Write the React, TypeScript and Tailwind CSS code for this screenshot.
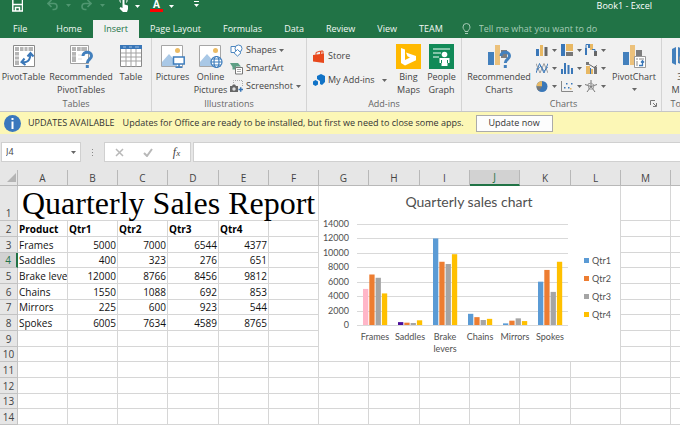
import type { ReactNode } from 'react'

const tabs = ['File', 'Home', 'Insert', 'Page Layout', 'Formulas', 'Data', 'Review', 'View', 'TEAM']
const columns = ['A', 'B', 'C', 'D', 'E', 'F', 'G', 'H', 'I', 'J', 'K', 'L', 'M', 'N']
const quarters = ['Qtr1', 'Qtr2', 'Qtr3', 'Qtr4']
const sales = [
	{ name: 'Frames', values: [5000, 7000, 6544, 4377] },
	{ name: 'Saddles', values: [400, 323, 276, 651] },
	{ name: 'Brake levers', values: [12000, 8766, 8456, 9812] },
	{ name: 'Chains', values: [1550, 1088, 692, 853] },
	{ name: 'Mirrors', values: [225, 600, 923, 544] },
	{ name: 'Spokes', values: [6005, 7634, 4589, 8765] },
]
const seriesColors = ['#5b9bd5', '#ed7d31', '#a5a5a5', '#ffc000']
const pointColors: Record<string, string> = { 'Frames-0': '#ffb6c8', 'Saddles-0': '#4b0f9b' }

function Caret({ className = 'text-[#666]' }: { className?: string }) {
	return (
		<svg viewBox="0 0 5 3" className={`h-[3px] w-[5px] shrink-0 ${className}`} fill="currentColor">
			<path d="M0 0h5L2.500 3z" />
		</svg>
	)
}

function Group({ label, className = '', children }: { label: string; className?: string; children: ReactNode }) {
	return (
		<section className={`relative flex shrink-0 flex-col border-r border-[#d4d4d4] ${className}`}>
			<div className="flex h-[60px] items-start">{children}</div>
			<h2 className="text-center leading-3 text-[#666]">{label}</h2>
		</section>
	)
}

function BigButton({ icon, lines, className, caret }: { icon: ReactNode; lines: string[]; className: string; caret?: boolean }) {
	return (
		<button className={`flex shrink-0 flex-col items-center whitespace-nowrap ${className}`}>
			<span className="flex h-8 items-center pt-1">{icon}</span>
			{lines.map((line) => (
				<span key={line} className="leading-[13px]">{line}</span>
			))}
			{caret && <span className="flex h-3 items-center"><Caret /></span>}
		</button>
	)
}

function SmallButton({ icon, label, caret }: { icon: ReactNode; label: string; caret?: boolean }) {
	return (
		<button className="flex h-[18px] items-center gap-[3px] whitespace-nowrap">
			{icon}
			{label}
			{caret && <Caret />}
		</button>
	)
}

function PivotTableIcon() {
	return (
		<svg viewBox="0 0 24 24" className="size-6" fill="none">
			<path d="M1.500 1.500h21v21h-21z" fill="#fff" stroke="#8a8a8a" />
			<path d="M3 3h4v4H3zM8 3h13v4H8zM3 8h4v13H3z" fill="#b5b5b5" />
			<path d="M12 3v4M16 3v4M3 12h4M3 16h4" stroke="#fff" />
			<path d="M10 18c5 1 8-1 8.500-8M12.500 14.500L9.500 18l4 3M15.500 12.500l3-3.500 3 3.500" stroke="#3a77b8" strokeWidth="2" />
		</svg>
	)
}

function QuestionMark() {
	return (
		<g fill="none" stroke="#4380bd" strokeWidth="3">
			<path d="M14 12c0-5 8.500-5 8.500 0 0 3.500-4.200 3-4.200 7" />
			<path d="M18.300 21v3" />
		</g>
	)
}

function RecommendedTableIcon() {
	return (
		<svg viewBox="0 0 25 25" className="size-[25px]" fill="none">
			<path d="M1.500 1.500h18v18h-18z" fill="#fff" stroke="#a0a0a0" />
			<path d="M3 3h4v4H3zM8 3h10v4H8zM3 8h4v10H3z" fill="#b5b5b5" />
			<path d="M12 3v4M3 12h4M9 11h4M9 15h4" stroke="#ddd" />
			<QuestionMark />
		</svg>
	)
}

function TableIcon() {
	return (
		<svg viewBox="0 0 24 24" className="size-6" fill="none">
			<path d="M1.500 1.500h21v21h-21z" fill="#fff" stroke="#8a8a8a" />
			<path d="M1 1h22v4H1z" fill="#3a77b8" />
			<path d="M4 3h3M10 3h3M16 3h4" stroke="#9dc0e4" />
			<path d="M2 9h20M2 13h20M2 17h20M7 5v18M12 5v18M17 5v18" stroke="#a3a3a3" />
		</svg>
	)
}

function PictureIcon({ online }: { online?: boolean }) {
	return (
		<svg viewBox="0 0 25 25" className="size-[25px]" fill="none">
			<path d="M1.500 1.500h21v21h-21z" fill="#fff" stroke="#a6a6a6" />
			<path d="M2 18l7-8 8 9v3H2z" fill="#a9c8e6" />
			<circle cx="17.500" cy="6.500" r="2.500" fill="#ecbc65" />
			{online ? (
				<g stroke="#3f7ebd" strokeWidth="1.200">
					<circle cx="18.500" cy="18" r="5.500" fill="#fff" />
					<ellipse cx="18.500" cy="18" rx="2.500" ry="5.500" />
					<path d="M13 18h11M14 15h9M14 21h9" />
				</g>
			) : (
				<g stroke="#3f7ebd" strokeWidth="1.500">
					<path d="M13.500 13h10.700v7H13.500z" fill="#fff" />
					<path d="M19 20v3M15.500 23.200h7" />
				</g>
			)}
		</svg>
	)
}

function ShapesIcon() {
	return (
		<svg viewBox="0 0 13 13" className="size-[13px]" fill="#fff" stroke="#4c86c0">
			<path d="M1 2.500h7v6H1z" />
			<circle cx="8.500" cy="4.500" r="3.500" />
			<path d="M7.500 5.500l3.500 3.300-3.500 3.300L4 8.800z" />
		</svg>
	)
}

function SmartArtIcon() {
	return (
		<svg viewBox="0 0 13 13" className="size-[13px]" fill="none">
			<path d="M0 1h8l3 3.500H6v3H2.500V5z" fill="#5e9f85" />
			<path d="M5.500 5.500h7v6.500h-7z" fill="#fff" stroke="#777" />
			<path d="M7 7.500h4M7 9.500h4" stroke="#aaa" />
		</svg>
	)
}

function ScreenshotIcon() {
	return (
		<svg viewBox="0 0 13 13" className="size-[13px]" fill="none">
			<path d="M3.500 3V.5h9V7" stroke="#aaa" strokeDasharray="1 1" />
			<path d="M0 6h2l1-1.500h2L6 6h2v6H0z" fill="#666" />
			<circle cx="4" cy="9" r="1.700" fill="#ddd" />
			<path d="M8.500 9.500h4.500M10.700 7.300v4.500" stroke="#3a77b8" strokeWidth="1.500" />
		</svg>
	)
}

function StoreIcon() {
	return (
		<svg viewBox="0 0 12 13" className="h-[13px] w-3" fill="none">
			<path d="M0 5l11-1.500V13L0 11.500z" fill="#e8481c" />
			<path d="M3 5V2.500l4.500-1.500V4M8 3.500V1h2v3" stroke="#e8481c" />
		</svg>
	)
}

function AddInsIcon() {
	return (
		<svg viewBox="0 0 12 12" className="size-3" fill="#1173c7">
			<path d="M4 2l4-2 4 2v6l-3 3-2-1V7L4 5z" />
			<path d="M0 7.500L2.500 6 5 7.500v3L2.500 12 0 10.500z" />
		</svg>
	)
}

function BingIcon() {
	return (
		<svg viewBox="0 0 25 25" className="size-[25px]">
			<path d="M0 0h25v25H0z" fill="#ffb900" />
			<path d="M5 4l4 1.500v10.500l5-2.600-2.500-1.200-1.500-3.700L20 12v4.200L9 21.500l-4-2.500z" fill="#fff" />
		</svg>
	)
}

function PeopleGraphIcon() {
	return (
		<svg viewBox="0 0 25 25" className="size-[25px]" fill="none">
			<path d="M0 0h25v25H0z" fill="#118a58" />
			<path d="M4 5h17M4 9h8M4 13h6" stroke="#a8d8c2" strokeWidth="1.500" />
			<circle cx="15.500" cy="10.500" r="2.800" fill="#fff" />
			<path d="M10.500 14h10v5h-2v3h-6v-3h-2z" fill="#fff" />
			<path d="M12.500 16v3M18.500 16v3" stroke="#118a58" />
		</svg>
	)
}

function BarsIcon({ pivot }: { pivot?: boolean }) {
	return (
		<svg viewBox="0 0 25 25" className="size-[25px]" fill="none">
			<path d="M1 8h6v13H1z" fill="#4380bd" />
			<path d="M8 1h5v20H8z" fill="#ecc17b" />
			<path d="M14 6h6v8h-6z" fill="#7d7d7d" />
			{pivot ? (
				<g>
					<path d="M12.500 12.500h11v11h-11z" fill="#fff" stroke="#999" />
					<path d="M14 14h2v2h-2zM17 14h5v2h-5zM14 17h2v5h-2z" fill="#c4c4c4" />
					<path d="M17 21.500h3.500V17M19 18.500l1.500-1.700 1.500 1.700" stroke="#3a77b8" strokeWidth="1.300" />
				</g>
			) : (
				<QuestionMark />
			)}
		</svg>
	)
}

const chartIcons: { name: string; art: ReactNode }[] = [
	{
		name: 'Column chart',
		art: <><path d="M0 5h3v7H0z" fill="#3a77b8" /><path d="M4 1h3v11H4z" fill="#e8b863" /><path d="M8.500 3h3v9h-3z" fill="#666" /></>,
	},
	{
		name: 'Hierarchy chart',
		art: <><path d="M0 0h4v12H0z" fill="#3a77b8" /><path d="M5 0h7v7H5z" fill="#e8b863" /><path d="M5 8h7v4H5z" fill="#777" /></>,
	},
	{
		name: 'Waterfall chart',
		art: <><path d="M0 4h2v7H0zM3 0h2v4H3z" fill="#3a77b8" /><path d="M5 0h3v6H5z" fill="#e8b863" /><path d="M9 7h3v5H9z" fill="#666" /><path d="M1 5V.5h3M7 5.500h3v2" stroke="#3a77b8" /></>,
	},
	{
		name: 'Line chart',
		art: <><path d="M0 11L3.500 1.500 8 11l4-9.500" stroke="#3a77b8" /><path d="M0 1.500L4 11l4-9.500L12 11" stroke="#888" strokeWidth=".8" /><path d="M0 7h2l3-3 3 5 4-4" stroke="#3a77b8" strokeWidth=".7" /></>,
	},
	{
		name: 'Statistic chart',
		art: <path d="M0 7h2v5H0zM3 1h2v11H3zM6.500 3h2v9h-2zM10 6h2v6h-2z" fill="#3a77b8" />,
	},
	{
		name: 'Combo chart',
		art: <><path d="M1 4h4v8H1zM6 7h2v5H6z" fill="#e8b863" /><path d="M9 5h3v7H9z" fill="#777" /><path d="M5 6h1v6H5z" fill="#3a77b8" /><path d="M2 1.500l4 2 3 2 3-2" stroke="#666" /><path d="M1 0h3v3H1z" fill="#777" /></>,
	},
	{
		name: 'Pie chart',
		art: <><circle cx="6" cy="6.500" r="5.500" fill="#3a77b8" /><path d="M6 6.500V1a5.500 5.500 0 00-5.500 5.500z" fill="#e8b863" /><path d="M6 6.500H.5A5.500 5.500 0 003 11z" fill="#777" /></>,
	},
	{
		name: 'Scatter chart',
		art: <><path d="M.5 1v10.500H12" stroke="#888" /><path d="M3 7h1.500v1.500H3zM5 3h1.500v1.500H5zM7 7h1.500v1.500H7zM10 3h1.500v1.500H10z" fill="#3a77b8" /><path d="M9 8h1.500v1.500H9z" fill="#e8b863" /></>,
	},
	{
		name: 'Radar chart',
		art: <><path d="M6 0v6.500M0 4.500l6 2 6-2M2 12l4-5.500L10 12" stroke="#777" /><path d="M3 4l3-1 3 2-1 4H4z" stroke="#999" /></>,
	},
]

function QuickAccess() {
	return (
		<div className="flex h-5 items-start text-white">
			<button aria-label="Save" className="ml-3">
				<svg viewBox="0 0 11 12" className="h-3 w-[11px]" fill="none" stroke="currentColor" strokeWidth="1.500">
					<path d="M.8-2v13h9.700V-2M1 4.500h9M3.500 11V7.500h4V11" />
				</svg>
			</button>
			<button aria-label="Undo" className="ml-6 flex items-center gap-2 text-[#4f9670]">
				<svg viewBox="0 0 11 11" className="size-[11px]" fill="none" stroke="currentColor" strokeWidth="1.600">
					<path d="M4.500 0L1 3.500 4.500 7M1.500 3.500H7c4 0 4 6 0 6H5.500" />
				</svg>
				<Caret className="text-[#4f9670]" />
			</button>
			<button aria-label="Redo" className="ml-[10px] flex items-center gap-2 text-[#4f9670]">
				<svg viewBox="0 0 11 11" className="size-[11px]" fill="none" stroke="currentColor" strokeWidth="1.600">
					<path d="M6.500 0L10 3.500 6.500 7M9.500 3.500H4c-4 0-4 6 0 6h1.500" />
				</svg>
				<Caret className="text-[#4f9670]" />
			</button>
			<button aria-label="Touch mode" className="ml-[14px] flex items-center gap-[6px]">
				<svg viewBox="0 0 10 12" className="h-3 w-[10px]" fill="currentColor">
					<path d="M3.500 0h2v4.500l3.500 1v3.500l-1 3H4L.5 8.500 1.500 7l2 1z" />
					<path d="M1.500 2.500C.5.500 1-1 1.500-1M7.500 2.500C8.500.500 8-1 7.500-1" fill="none" stroke="currentColor" />
				</svg>
				<Caret className="text-white" />
			</button>
			<button aria-label="Font color" className="ml-[10px] flex items-center gap-[6px]">
				<span className="w-[13px] border-b-[3px] border-[#f00] text-center text-[10px] leading-[9px] font-bold">A</span>
				<Caret className="text-white" />
			</button>
			<button aria-label="Customize toolbar" className="ml-5 flex h-[7px] flex-col items-center justify-between pt-px">
				<span className="h-px w-[5px] bg-white" />
				<Caret className="text-white" />
			</button>
			<h1 className="mr-7 ml-auto leading-3">Book1 - Excel</h1>
		</div>
	)
}

function Ribbon() {
	return (
		<div className="flex h-[74px] overflow-hidden border-b border-[#c6c6c6] bg-[#f1f1f1] text-[#444]">
			<Group label="Tables" className="w-[152px] pl-px">
				<BigButton icon={<PivotTableIcon />} lines={['PivotTable']} className="w-[45px]" />
				<BigButton icon={<RecommendedTableIcon />} lines={['Recommended', 'PivotTables']} className="w-[70px]" />
				<BigButton icon={<TableIcon />} lines={['Table']} className="w-[30px]" />
			</Group>
			<Group label="Illustrations" className="w-[155px]">
				<BigButton icon={<PictureIcon />} lines={['Pictures']} className="w-[41px]" />
				<BigButton icon={<PictureIcon online />} lines={['Online', 'Pictures']} className="w-[35px]" />
				<div className="flex flex-col pt-[3px] pl-[2px]">
					<SmallButton icon={<ShapesIcon />} label="Shapes" caret />
					<SmallButton icon={<SmartArtIcon />} label="SmartArt" />
					<SmallButton icon={<ScreenshotIcon />} label="Screenshot" caret />
				</div>
			</Group>
			<Group label="Add-ins" className="w-[155px]">
				<div className="flex w-[84px] flex-col gap-[6px] pt-[9px] pl-[6px]">
					<SmallButton icon={<StoreIcon />} label="Store" />
					<button className="flex h-[18px] items-center gap-[3px] whitespace-nowrap">
						<AddInsIcon />
						My Add-ins
						<span className="ml-1"><Caret /></span>
					</button>
				</div>
				<BigButton icon={<BingIcon />} lines={['Bing', 'Maps']} className="w-[35px]" />
				<BigButton icon={<PeopleGraphIcon />} lines={['People', 'Graph']} className="w-[31px]" />
			</Group>
			<Group label="Charts" className="w-[200px] pl-1">
				<BigButton icon={<BarsIcon />} lines={['Recommended', 'Charts']} className="w-[66px]" />
				<div className="grid w-[78px] grid-cols-3 pt-[3px] pl-1">
					{chartIcons.map((icon) => (
						<button key={icon.name} aria-label={icon.name} className="flex h-[18px] items-center gap-1">
							<svg viewBox="0 0 12 12" className="size-3" fill="none">{icon.art}</svg>
							<Caret />
						</button>
					))}
				</div>
				<BigButton icon={<BarsIcon pivot />} lines={['PivotChart']} className="w-[48px]" caret />
				<button aria-label="Chart options" className="absolute right-1 bottom-1">
					<svg viewBox="0 0 7 7" className="size-[7px]" fill="none" stroke="#777">
						<path d="M.5 5V.5H5M3 3l3 3M6.500 3v3.500H3" />
					</svg>
				</button>
			</Group>
			<Group label="Tours" className="w-[42px]">
				<BigButton
					icon={
						<svg viewBox="0 0 25 25" className="size-[25px]" fill="none">
							<path d="M1 5l4-2v18l-4-2zM7 3l5 2v16l-5-2z" fill="#4380bd" />
							<circle cx="15" cy="15" r="6.500" fill="#fff" stroke="#888" />
							<path d="M9 15h12M15 9v12" stroke="#888" />
						</svg>
					}
					lines={['3D', 'Maps']}
					className="w-[42px]"
				/>
			</Group>
		</div>
	)
}

function FormulaBar() {
	return (
		<div className="flex h-[36px] items-start bg-[#e6e6e6] pt-2 pl-px">
			<div className="flex h-5 w-20 items-center border border-[#d0d0d0] bg-white pr-1">
				<input aria-label="Name box" defaultValue="J4" className="w-full min-w-0 pl-1 text-[#444] outline-none" />
				<Caret />
			</div>
			<div className="flex h-5 w-[23px] flex-col items-center justify-center gap-[2px]">
				<i className="size-px bg-[#888]" />
				<i className="size-px bg-[#888]" />
				<i className="size-px bg-[#888]" />
			</div>
			<div className="flex h-5 w-[87px] items-center justify-around border border-[#d0d0d0] bg-white">
				<button aria-label="Cancel">
					<svg viewBox="0 0 9 9" className="size-[9px]" fill="none" stroke="#b8b8b8" strokeWidth="1.500"><path d="M1 1l7 7M8 1L1 8" /></svg>
				</button>
				<button aria-label="Enter">
					<svg viewBox="0 0 10 9" className="h-[9px] w-[10px]" fill="none" stroke="#b8b8b8" strokeWidth="2"><path d="M1 5l3 3 5-7" /></svg>
				</button>
				<button aria-label="Insert function" className="font-['Liberation_Serif',serif] text-[12px] leading-3 text-[#444] italic">
					f<span className="text-[9px]">x</span>
				</button>
			</div>
			<input aria-label="Formula" className="ml-[2px] h-5 min-w-0 flex-1 border border-r-0 border-[#d0d0d0] bg-white px-1 outline-none" />
		</div>
	)
}

function SalesChart() {
	const scale = 101 / 14000
	return (
		<svg viewBox="0 0 301 175" className="absolute top-4 left-[319px] h-[175px] w-[301px] bg-white font-['Lato',sans-serif] text-[9px]" fill="#505050">
			<text x="150" y="21" textAnchor="middle" className="text-[14px]">Quarterly sales chart</text>
			{[0, 2000, 4000, 6000, 8000, 10000, 12000, 14000].map((tick) => {
				const y = Math.round(139 - tick * scale)
				return (
					<g key={tick}>
						<path d={`M38 ${y + 0.5}H249`} stroke="#d9d9d9" />
						<text x="30" y={y + 3} textAnchor="end">{tick}</text>
					</g>
				)
			})}
			{sales.map((product, i) => (
				<g key={product.name}>
					{product.values.map((value, s) => (
						<rect
							key={s}
							x={44 + i * 35 + s * 6.3}
							y={139 - value * scale}
							width="5.300"
							height={value * scale}
							fill={pointColors[`${product.name}-${s}`] ?? seriesColors[s]}
						/>
					))}
					{product.name.split(' ').map((word, line) => (
						<text key={word} x={56 + i * 35} y={154 + line * 12} textAnchor="middle">{word}</text>
					))}
				</g>
			))}
			{quarters.map((quarter, i) => (
				<g key={quarter}>
					<rect x="265" y={72 + i * 18} width="5" height="5" fill={seriesColors[i]} />
					<text x="273" y={78 + i * 18}>{quarter}</text>
				</g>
			))}
		</svg>
	)
}

function Sheet() {
	const line = 'border-r border-b border-[#d6d6d6]'
	const rowHead = 'border-r border-b border-[#c3c3c3] text-center font-normal'
	return (
		<div className="relative overflow-hidden">
			<table className="w-full table-fixed border-separate border-spacing-0 text-[10px] leading-[14px] text-[#111]">
				<colgroup>
					<col className="w-[18px]" />
					{columns.map((c) => (
						<col key={c} className={'DHK'.includes(c) ? 'w-[51px]' : 'w-[50px]'} />
					))}
				</colgroup>
				<thead>
					<tr className="h-4 bg-[#e6e6e6] text-[#444]">
						<th className="border-r border-b border-[#b8b8b8] p-0">
							<svg viewBox="0 0 10 10" className="ml-auto size-[10px]" fill="#b4b4b4"><path d="M9 0v9H0z" /></svg>
						</th>
						{columns.map((c) => (
							<th
								key={c}
								className={
									c === 'J'
										? 'border-r border-b-2 border-r-[#b8b8b8] border-b-[#217346] bg-[#d2d2d2] p-0 leading-[13px] font-normal text-[#217346]'
										: 'border-r border-b border-[#b8b8b8] p-0 font-normal'
								}
							>
								{c}
							</th>
						))}
					</tr>
				</thead>
				<tbody>
					<tr className="h-[35px]">
						<th className={`${rowHead} bg-[#e6e6e6] p-0 align-bottom text-[#444]`}>1</th>
						<td colSpan={6} className={`${line} p-0 pl-1 font-['Liberation_Serif',serif] text-[32px] leading-8 whitespace-nowrap text-black`}>
							Quarterly Sales Report
						</td>
						{columns.slice(6).map((c) => <td key={c} className={`${line} p-0`} />)}
					</tr>
					{Array.from({ length: 13 }, (_, i) => i + 2).map((row) => {
						const product = sales[row - 3]
						return (
							<tr key={row} className={row % 3 === 1 ? 'h-[15px]' : 'h-4'}>
								<th className={`${rowHead} p-0 ${row === 4 ? 'border-r-2 border-r-[#217346] bg-[#d2d2d2] text-[#217346]' : 'bg-[#e6e6e6] text-[#444]'}`}>{row}</th>
								{columns.map((c, i) => {
									if (row === 2) {
										return <td key={c} className={`${line} p-0 pl-px font-bold text-black`}>{i === 0 ? 'Product' : quarters[i - 1]}</td>
									}
									if (i === 0) {
										return <td key={c} className={`${line} overflow-hidden p-0 pl-px whitespace-nowrap`}>{product?.name}</td>
									}
									return <td key={c} className={`${line} p-0 pr-px text-right`}>{product?.values[i - 1]}</td>
								})}
							</tr>
						)
					})}
				</tbody>
			</table>
			<SalesChart />
		</div>
	)
}

export default function App() {
	return (
		<main className="min-h-screen w-full overflow-hidden bg-white font-['Open_Sans','Noto_Sans',sans-serif] text-[9px]">
			<header className="bg-[#217346]">
				<QuickAccess />
				<nav className="flex h-[18px] items-stretch whitespace-nowrap text-[#f2f8f4]">
					{tabs.map((tab) => (
						<a
							key={tab}
							href="#"
							className={`flex items-center ${tab === 'File' ? 'pr-[18px] pl-[13px]' : 'px-[11px]'} ${tab === 'Insert' ? 'bg-[#f1f1f1] text-[#217346]' : ''}`}
						>
							{tab}
						</a>
					))}
					<label className="ml-2 flex flex-1 items-center gap-2 text-[#a6cbb6]">
						<svg viewBox="0 0 9 12" className="h-3 w-[9px]" fill="none" stroke="currentColor"><path d="M3 8.500C3 7 1 6.500 1 4a3.500 3.500 0 017 0c0 2.500-2 3-2 4.500zM3 10.500h3" /></svg>
						<input aria-label="Tell me" placeholder="Tell me what you want to do" className="min-w-0 flex-1 outline-none placeholder:text-[#a6cbb6]" />
					</label>
				</nav>
			</header>
			<Ribbon />
			<div className="flex h-[22px] items-center bg-[#fcf7b6] pl-1 whitespace-nowrap text-[#333]">
				<svg viewBox="0 0 17 17" className="size-[17px]"><circle cx="8.500" cy="8.500" r="8.500" fill="#3a78bd" /><path d="M7.500 3h2v2h-2zM7.500 6.500h2V14h-2z" fill="#fff" /></svg>
				<strong className="ml-[7px] font-normal">UPDATES AVAILABLE</strong>
				<span className="ml-2">Updates for Office are ready to be installed, but first we need to close some apps.</span>
				<button className="ml-3 h-[17px] w-[77px] border border-[#ababab] bg-[#fdfdfd]">Update now</button>
			</div>
			<FormulaBar />
			<Sheet />
		</main>
	)
}
